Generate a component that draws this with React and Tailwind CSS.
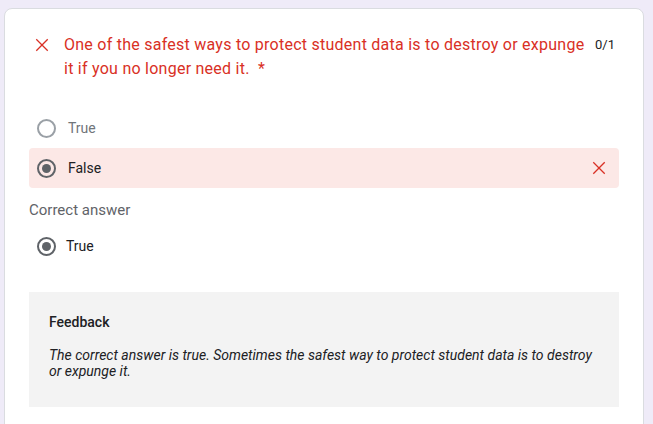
import React from 'react';

function CrossIcon({ className }) {
  return (
    <svg viewBox="0 0 24 24" className={className} fill="none" stroke="currentColor" strokeWidth="2.2" strokeLinecap="square">
      <path d="M3 3l18 18M21 3L3 21" />
    </svg>
  );
}

function Radio({ checked, muted }) {
  return (
    <div className={`h-[19px] w-[19px] shrink-0 rounded-full border-2 flex items-center justify-center ${muted ? 'border-[#9aa0a6]' : 'border-[#5f6368]'}`}>
      {checked && <div className="h-[9px] w-[9px] rounded-full bg-[#5f6368]" />}
    </div>
  );
}

export default function App() {
  return (
    <div className="min-h-screen bg-[#efebf8] pt-2 pl-1 overflow-hidden" style={{ fontFamily: 'Roboto, "Liberation Sans", sans-serif' }}>
      <div className="w-[640px] bg-white border border-[#dadce0] rounded-lg px-6 pt-6 pb-6">

        {/* Question header */}
        <div className="flex items-start">
          <div className="w-[35px] shrink-0 pl-[6px] pt-[5px]">
            <CrossIcon className="h-[14px] w-[14px] text-[#d93025]" />
          </div>
          <p className="flex-1 text-[16px] leading-[24px] text-[#d93025] tracking-[0.25px]">
            One of the safest ways to protect student data is to destroy or expunge it if you no longer need it.&nbsp; *
          </p>
          <span className="w-[34px] shrink-0 text-right pr-[4px] text-[13px] leading-[24px] text-[#202124]">0/1</span>
        </div>

        {/* Options */}
        <div className="mt-[27px]">
          <div className="h-10 flex items-center pl-[8px] gap-[12px]">
            <Radio muted />
            <span className="text-[14px] text-[#70757a]">True</span>
          </div>
          <div className="h-10 flex items-center pl-[8px] pr-[13px] gap-[12px] bg-[#fce8e6] rounded">
            <Radio checked />
            <span className="flex-1 text-[14px] text-[#202124]">False</span>
            <CrossIcon className="h-[14px] w-[14px] text-[#d93025]" />
          </div>
        </div>

        {/* Correct answer */}
        <p className="mt-[12px] text-[15px] leading-[20px] text-[#5f6368]">Correct answer</p>
        <div className="mt-[16px] flex items-center pl-[8px] gap-[10px]">
          <Radio checked />
          <span className="text-[14px] text-[#202124]">True</span>
        </div>

        {/* Feedback */}
        <div className="mt-[35px] bg-[#f3f3f3] px-5 pt-[21px] pb-[28px]">
          <p className="text-[14px] leading-[18px] font-medium text-[#202124]">Feedback</p>
          <p className="mt-[16px] text-[14px] leading-[16px] italic text-[#202124]">
            The correct answer is true. Sometimes the safest way to protect student data is to destroy or expunge it.
          </p>
        </div>
      </div>
    </div>
  );
}
